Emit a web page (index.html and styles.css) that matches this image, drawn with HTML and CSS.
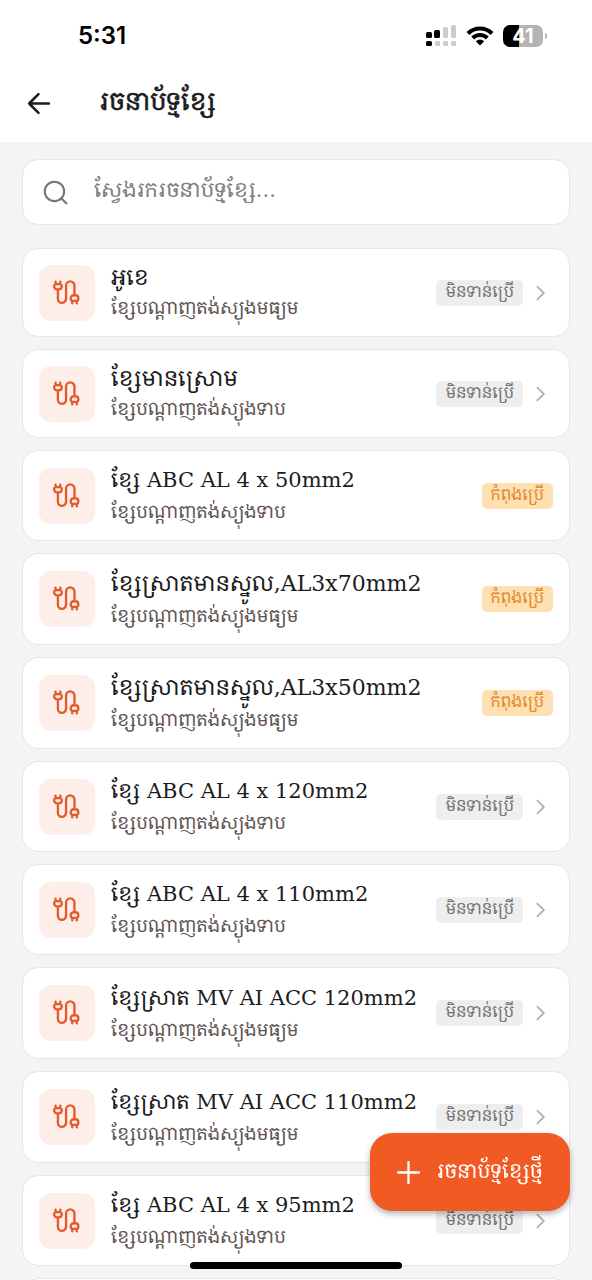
FILE: index.html
```html
<!DOCTYPE html>
<html lang="km">
<head>
<meta charset="utf-8">
<meta name="viewport" content="width=device-width, initial-scale=1">
<title>រចនាប័ទ្មខ្សែ</title>
<link rel="stylesheet" href="styles.css">
</head>
<body>
<svg class="sprite" aria-hidden="true">
  <symbol id="cable" viewBox="0.8 0.6 24 24">
    <path d="M17.300 21.500v-2.200a1.600 1.600 0 0 1-1.300-1.600V17a2.500 2.500 0 0 1 2.500-2.500h1.500a2.500 2.500 0 0 1 2.500 2.500v.700a1.600 1.600 0 0 1-1.300 1.600v2.200M19.200 14.500V6.200a3.600 3.600 0 0 0-7.200 0v11.300a3.500 3.500 0 0 1-7 0V9.500M21.200 19.300h-3.900M3 5h4M7 2.800v2.200a1.600 1.600 0 0 1 1.300 1.600V7a2.500 2.500 0 0 1-2.500 2.500H4.300A2.500 2.500 0 0 1 1.800 7v-.4A1.600 1.600 0 0 1 3 5V2.800"/>
  </symbol>
  <symbol id="chevron" viewBox="0 0 24 24"><path d="M7 5l7 7-7 7"/></symbol>
</svg>
<div class="app">
  <header class="top">
    <div class="status">
      <span class="time">5:31</span>
      <div class="indicators">
        <svg class="signal" viewBox="0 0 31 22" aria-hidden="true">
          <g class="dim"><rect x="17" y="2" width="5" height="11" rx="1.500"/><rect x="25" y="0" width="5" height="13" rx="1.500"/><rect x="9" y="16" width="5" height="5" rx="1.500"/><rect x="17" y="16" width="5" height="5" rx="1.500"/><rect x="25" y="16" width="5" height="5" rx="1.500"/></g>
          <rect x="0" y="7" width="6" height="6" rx="1.500"/><rect x="8" y="5" width="6" height="8" rx="1.500"/><rect x="0" y="16" width="6" height="5" rx="1.500"/>
        </svg>
        <svg class="wifi" viewBox="0 0 28 20" aria-hidden="true">
          <path class="arc" d="M2 7.500a17 17 0 0 1 24 0M6.700 12a10.500 10.500 0 0 1 14.600 0"/>
          <path d="M14 19.500l-4.200-4.200a6 6 0 0 1 8.400 0z"/>
        </svg>
        <div class="battery"><span class="level">41</span><span class="cap"></span></div>
      </div>
    </div>
    <div class="bar">
      <button class="back" type="button" aria-label="Back">
        <svg viewBox="0 0 24 24" aria-hidden="true"><path d="M22 12H3M12 3L3 12l9 9"/></svg>
      </button>
      <h1 class="heading">រចនាប័ទ្មខ្សែ</h1>
    </div>
  </header>
  <main class="content">
    <label class="search">
      <svg viewBox="0 0 24 24" aria-hidden="true"><circle cx="11" cy="11" r="9.300"/><path d="M17.800 17.800L22.500 22.500"/></svg>
      <input type="search" aria-label="ស្វែងរក" placeholder="ស្វែងរករចនាប័ទ្មខ្សែ...">
    </label>
    <ul class="list">
      <li class="card khmer"><span class="tile"><svg><use href="#cable"/></svg></span><div class="text"><h2>អូខេ</h2><p>ខ្សែបណ្តាញតង់ស្យុងមធ្យម</p></div><span class="badge">មិនទាន់ប្រើ</span><svg class="go"><use href="#chevron"/></svg></li>
      <li class="card khmer"><span class="tile"><svg><use href="#cable"/></svg></span><div class="text"><h2>ខ្សែមានស្រោម</h2><p>ខ្សែបណ្តាញតង់ស្យុងទាប</p></div><span class="badge">មិនទាន់ប្រើ</span><svg class="go"><use href="#chevron"/></svg></li>
      <li class="card latin"><span class="tile"><svg><use href="#cable"/></svg></span><div class="text"><h2>ខ្សែ ABC AL 4 x 50mm2</h2><p>ខ្សែបណ្តាញតង់ស្យុងទាប</p></div><span class="badge used">កំពុងប្រើ</span></li>
      <li class="card core"><span class="tile"><svg><use href="#cable"/></svg></span><div class="text"><h2>ខ្សែស្រាតមានស្នូល,AL3x70mm2</h2><p>ខ្សែបណ្តាញតង់ស្យុងមធ្យម</p></div><span class="badge used">កំពុងប្រើ</span></li>
      <li class="card core"><span class="tile"><svg><use href="#cable"/></svg></span><div class="text"><h2>ខ្សែស្រាតមានស្នូល,AL3x50mm2</h2><p>ខ្សែបណ្តាញតង់ស្យុងមធ្យម</p></div><span class="badge used">កំពុងប្រើ</span></li>
      <li class="card latin"><span class="tile"><svg><use href="#cable"/></svg></span><div class="text"><h2>ខ្សែ ABC AL 4 x 120mm2</h2><p>ខ្សែបណ្តាញតង់ស្យុងទាប</p></div><span class="badge">មិនទាន់ប្រើ</span><svg class="go"><use href="#chevron"/></svg></li>
      <li class="card latin"><span class="tile"><svg><use href="#cable"/></svg></span><div class="text"><h2>ខ្សែ ABC AL 4 x 110mm2</h2><p>ខ្សែបណ្តាញតង់ស្យុងទាប</p></div><span class="badge">មិនទាន់ប្រើ</span><svg class="go"><use href="#chevron"/></svg></li>
      <li class="card"><span class="tile"><svg><use href="#cable"/></svg></span><div class="text"><h2>ខ្សែស្រាត MV AI ACC 120mm2</h2><p>ខ្សែបណ្តាញតង់ស្យុងមធ្យម</p></div><span class="badge">មិនទាន់ប្រើ</span><svg class="go"><use href="#chevron"/></svg></li>
      <li class="card"><span class="tile"><svg><use href="#cable"/></svg></span><div class="text"><h2>ខ្សែស្រាត MV AI ACC 110mm2</h2><p>ខ្សែបណ្តាញតង់ស្យុងមធ្យម</p></div><span class="badge">មិនទាន់ប្រើ</span><svg class="go"><use href="#chevron"/></svg></li>
      <li class="card latin"><span class="tile"><svg><use href="#cable"/></svg></span><div class="text"><h2>ខ្សែ ABC AL 4 x 95mm2</h2><p>ខ្សែបណ្តាញតង់ស្យុងទាប</p></div><span class="badge">មិនទាន់ប្រើ</span><svg class="go"><use href="#chevron"/></svg></li>
      <li class="card next"></li>
    </ul>
  </main>
  <button class="fab" type="button">
    <svg viewBox="0 0 24 24" aria-hidden="true"><path d="M12 1v22M1 12h22"/></svg>
    <span>រចនាប័ទ្មខ្សែថ្មី</span>
  </button>
  <div class="home"></div>
</div>
</body>
</html>
```
FILE: styles.css
```css
* { box-sizing: border-box; }
body {
  margin: 0;
  background: #f4f4f4;
  color: #1c1c1e;
  font-family: "DejaVu Serif", "Noto Serif Khmer", "Noto Sans Khmer", "Khmer OS", serif;
}
h1, h2, p, ul { margin: 0; padding: 0; font-weight: 400; }
button, input { font: inherit; border: 0; padding: 0; background: none; color: inherit; }
svg { fill: none; stroke: currentColor; stroke-width: 2; stroke-linecap: round; stroke-linejoin: round; flex: none; }
.sprite { position: absolute; width: 0; height: 0; }
.app { height: 100vh; display: flex; flex-direction: column; overflow: hidden; }

.top { background: #fff; flex: none; }
.status { height: 70px; padding: 2px 45px 0 78px; display: flex; align-items: center; justify-content: space-between; }
.time { font: 600 24px/28px Inter, sans-serif; color: #000; }
.indicators { display: flex; align-items: center; gap: 9px; color: #000; }
.signal { width: 31px; height: 22px; fill: #000; stroke: none; }
.dim { fill: #ccc; }
.wifi { width: 28px; height: 20px; fill: #000; stroke: none; }
.arc { fill: none; stroke: #000; stroke-width: 4; stroke-linecap: butt; }
.battery { display: flex; align-items: center; gap: 2px; }
.level {
  width: 40px; height: 22px; border-radius: 7px;
  background: linear-gradient(90deg, #000 41%, #b3b3b3 41%);
  color: #fff; font: 700 20px/22px Inter, sans-serif; text-align: center;
}
.cap { width: 2px; height: 6px; border-radius: 0 2px 2px 0; background: #b3b3b3; }
.bar { height: 72px; padding: 0 26px 8px; display: flex; align-items: center; gap: 48px; }
.back { display: flex; padding-top: 3px; }
.back svg { width: 25px; height: 25px; stroke-width: 2.4; }
.heading { font-size: 25px; line-height: 40px; -webkit-text-stroke: 0.5px; }

.content { flex: 1; min-height: 0; overflow: auto; scrollbar-width: none; padding: 17px 22px; }
.search {
  height: 66px; margin-bottom: 23px; padding: 0 20px;
  display: flex; align-items: center; gap: 26px;
  background: #fff; border: 1px solid #e6e6e6; border-radius: 16px; color: #757575;
}
.search svg { width: 25px; height: 25px; }
.search input { flex: 1; min-width: 0; height: 60px; padding-bottom: 4px; font-size: 21px; line-height: 44px; outline: 0; }
.search input::placeholder { color: #808080; opacity: 1; line-height: 44px; }

.list { list-style: none; display: flex; flex-direction: column; gap: 12px; }
.card {
  display: flex; align-items: center; padding: 13px 16px;
  background: #fff; border: 1px solid #e6e6e6; border-radius: 16px;
}
.tile { width: 56px; height: 56px; border-radius: 12px; background: #fdeeea; color: #e55a2b; display: flex; align-items: center; justify-content: center; flex: none; }
.tile svg { width: 28px; height: 28px; }
.text { flex: 1; min-width: 0; padding-left: 16px; white-space: nowrap; }
.text h2 { font-size: 21px; line-height: 34px; }
.text p { font-size: 18px; line-height: 30px; color: #5f5654; }
.latin h2 { line-height: 33px; }
.khmer h2 { font-size: 22px; line-height: 31px; }
.core h2 { font-size: 22px; }
.badge { height: 26px; padding: 0 9px; border-radius: 5px; background: #eee; color: #757575; font-size: 16px; line-height: 24px; flex: none; }
.used { background: #ffe0b2; color: #e08a2e; }
.go { width: 22px; height: 22px; margin-left: 8px; color: #b3b3b3; }
.next { min-height: 92px; }

.fab {
  position: fixed; right: 22px; bottom: 69px; height: 78px; padding: 0 27px;
  display: flex; align-items: center; gap: 16px; border-radius: 22px;
  background: #f15a22; color: #fff; font-size: 20px; line-height: 40px;
  box-shadow: 0 3px 6px rgba(0, 0, 0, .3);
}
.fab svg { width: 23px; height: 23px; stroke-width: 2.4; }
.fab span { padding-bottom: 2px; }
.home { position: fixed; left: 50%; bottom: 11px; width: 212px; height: 7px; margin-left: -106px; border-radius: 4px; background: #000; }
```
